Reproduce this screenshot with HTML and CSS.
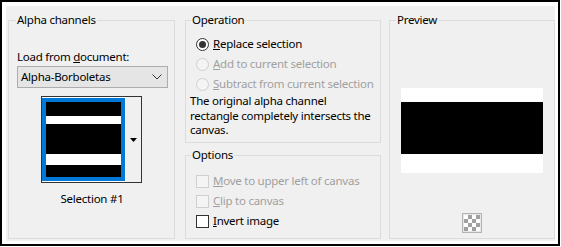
FILE: index.html
```html
<!DOCTYPE html>
<html lang="en">
<head>
  <meta charset="UTF-8">
  <title>Load Selection From Alpha Channel</title>
  <link rel="stylesheet" href="styles.css">
</head>
<body>
  <div class="dialog">
    <div class="panel">
      <fieldset class="group alpha">
        <legend>Alpha channels</legend>
        <div class="field-label">Load from <u>d</u>ocument:</div>
        <div class="select">
          <span>Alpha-Borboletas</span>
          <svg class="chevron" width="10" height="6" viewBox="0 0 10 6"><path d="M0.5 0.5 L5 5 L9.5 0.5" fill="none" stroke="#333" stroke-width="1"/></svg>
        </div>
        <div class="picker">
          <div class="thumb">
            <div class="band black" style="height: 14px"></div>
            <div class="band white" style="height: 8px"></div>
            <div class="band black" style="height: 30px"></div>
            <div class="band white" style="height: 11px"></div>
            <div class="band black" style="height: 12px"></div>
          </div>
          <div class="picker-btn">
            <svg width="7" height="4" viewBox="0 0 7 4"><path d="M0 0 H7 L3.5 4 Z" fill="#000"/></svg>
          </div>
        </div>
        <div class="caption">Selection #1</div>
      </fieldset>

      <div class="middle">
        <fieldset class="group operation">
          <legend>Operation</legend>
          <div class="choice">
            <span class="radio checked"></span>
            <span><u>R</u>eplace selection</span>
          </div>
          <div class="choice disabled">
            <span class="radio"></span>
            <span><u>A</u>dd to current selection</span>
          </div>
          <div class="choice disabled">
            <span class="radio"></span>
            <span><u>S</u>ubtract from current selection</span>
          </div>
          <p class="note">The original alpha channel rectangle completely intersects the canvas.</p>
        </fieldset>

        <fieldset class="group options">
          <legend>Options</legend>
          <div class="choice disabled">
            <span class="check"></span>
            <span><u>M</u>ove to upper left of canvas</span>
          </div>
          <div class="choice disabled">
            <span class="check"></span>
            <span><u>C</u>lip to canvas</span>
          </div>
          <div class="choice">
            <span class="check"></span>
            <span><u>I</u>nvert image</span>
          </div>
        </fieldset>
      </div>

      <fieldset class="group preview">
        <legend>Preview</legend>
        <div class="preview-img">
          <div class="band white" style="height: 14px"></div>
          <div class="band black" style="height: 52px"></div>
          <div class="band white" style="height: 19px"></div>
        </div>
        <div class="checker-btn"><div class="checker"></div></div>
      </fieldset>
    </div>
  </div>
</body>
</html>
```

FILE: styles.css
```css
body {
    margin: 0;
    background-color: #fff;
    font-family: 'Noto Sans', sans-serif;
    font-size: 11.5px;
    letter-spacing: -0.25px;
    line-height: 16px;
    color: #000;
}

u {
    text-decoration: underline;
    text-underline-offset: 1px;
}

.dialog {
    width: 560px;
    height: 246px;
    box-sizing: border-box;
    border: 2px solid #000;
    background-color: #fff;
    padding: 4px 3px 3px 4px;
}

.panel {
    height: 100%;
    box-sizing: border-box;
    background-color: #f0f0f0;
    display: flex;
    padding: 6px 0 2px 2px;
}

.group {
    margin: 0;
    min-width: 0;
    border: 1px solid #dcdcdc;
    padding: 0 4px;
    box-sizing: border-box;
}

.group legend {
    padding: 0 1px;
}

/* left column */
.alpha {
    width: 167px;
    padding: 0 8px;
}

.alpha legend {
    margin-left: -1px;
}

.field-label {
    margin-top: 21px;
}

.select {
    margin-top: 1px;
    width: 151px;
    height: 22px;
    box-sizing: border-box;
    border: 1px solid #adadad;
    background-color: #e5e5e5;
    display: flex;
    align-items: center;
    justify-content: space-between;
    padding: 0 5px 0 3px;
}

.chevron {
    display: block;
}

.picker {
    margin: 8px auto 0;
    width: 101px;
    height: 87px;
    box-sizing: border-box;
    border: 1px solid #333;
    background-color: #fff;
    display: flex;
    padding-top: 1px;
}

.thumb {
    border: 4px solid #0078d7;
    width: 75px;
    height: 75px;
}

.band.black {
    background-color: #000;
}

.band.white {
    background-color: #fff;
}

.picker-btn {
    flex: 1;
    margin-top: -1px;
    background-color: #f0f0f0;
    border-left: 1px solid #fff;
    display: flex;
    align-items: center;
    justify-content: center;
}

.picker-btn svg {
    display: block;
}

.caption {
    margin-top: 8px;
    text-align: center;
    padding-left: 1px;
}

/* middle column */
.middle {
    width: 196px;
    margin-left: 10px;
    display: flex;
    flex-direction: column;
}

.operation {
    height: 131px;
}

.operation legend,
.options legend {
    margin-left: 1px;
}

.options {
    flex: 1;
    margin-top: 4px;
}

.choice {
    height: 20px;
    display: flex;
    align-items: center;
    gap: 4px;
    margin-left: 6px;
    white-space: nowrap;
}

.operation .choice:first-of-type {
    margin-top: 6px;
}

.options .choice:first-of-type {
    margin-top: 8px;
}

.choice.disabled {
    color: #a0a0a0;
}

.radio {
    width: 13px;
    height: 13px;
    box-sizing: border-box;
    border-radius: 50%;
    border: 1px solid #333;
    background-color: #fff;
    position: relative;
}

.radio.checked::after {
    content: "";
    position: absolute;
    left: 2px;
    top: 2px;
    width: 7px;
    height: 7px;
    border-radius: 50%;
    background-color: #333;
}

.disabled .radio {
    border-color: #cfcfcf;
    background-color: #f4f4f4;
}

.check {
    width: 13px;
    height: 13px;
    box-sizing: border-box;
    border: 1px solid #333;
    background-color: #fff;
}

.disabled .check {
    border-color: #cfcfcf;
    background-color: #f4f4f4;
}

.note {
    margin: 0;
    line-height: 14.5px;
}

/* right column */
.preview {
    width: 166px;
    margin-left: 8px;
}

.preview legend {
    margin-left: 2px;
}

.preview-img {
    margin: 60px auto 0;
    width: 142px;
}

.checker-btn {
    margin: 40px auto 0;
    width: 20px;
    height: 20px;
    box-sizing: border-box;
    border: 1px solid #b4b4b4;
    padding: 1px;
    background-color: #e6e6e6;
}

.checker {
    width: 16px;
    height: 16px;
    background: repeating-conic-gradient(#a0a0a0 0 25%, #fff 0 50%) 0 0 / 8px 8px;
}
```
